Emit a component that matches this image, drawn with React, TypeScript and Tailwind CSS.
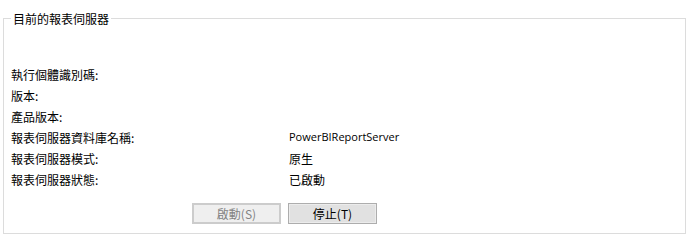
import React from "react";

const rows: [string, string][] = [
  ["執行個體識別碼:", ""],
  ["版本:", ""],
  ["產品版本:", ""],
  ["報表伺服器資料庫名稱:", "PowerBIReportServer"],
  ["報表伺服器模式:", "原生"],
  ["報表伺服器狀態:", "已啟動"],
];

export default function App() {
  return (
    <div
      className="w-[689px] h-[242px] bg-white text-black overflow-hidden pt-[10px]"
      style={{ fontFamily: '"Noto Sans CJK TC", "Noto Sans", sans-serif' }}
    >
      <fieldset className="mx-[3px] border border-[#dcdcdc] pl-[7px] pr-2 pb-[8px] pt-[37px] h-[224px]">
        <legend className="ml-0 px-[2px] text-[12px] leading-[17px]">目前的報表伺服器</legend>
        <div className="flex flex-col">
          {rows.map(([label, value]) => (
            <div key={label} className="flex items-center h-[21px] text-[12px]">
              <div className="w-[278px]">{label}</div>
              <div
                className={value.startsWith("Power") ? "text-[11px]" : ""}
                style={value.startsWith("Power") ? { fontFamily: '"Open Sans", "Noto Sans", sans-serif' } : undefined}
              >
                {value}
              </div>
            </div>
          ))}
        </div>
        <div className="flex gap-[7px] ml-[181px] mt-[13px]">
          <button
            disabled
            className="w-[89px] h-[21px] border-2 border-[#cccccc] bg-[#efefef] text-[#838383] text-[12px] leading-none flex items-center justify-center"
          >
            啟動(S)
          </button>
          <button className="w-[89px] h-[21px] border border-[#adadad] bg-[#e1e1e1] text-[12px] leading-none flex items-center justify-center shadow-[inset_0_0_0_1px_#ececec]">
            停止(T)
          </button>
        </div>
      </fieldset>
    </div>
  );
}
